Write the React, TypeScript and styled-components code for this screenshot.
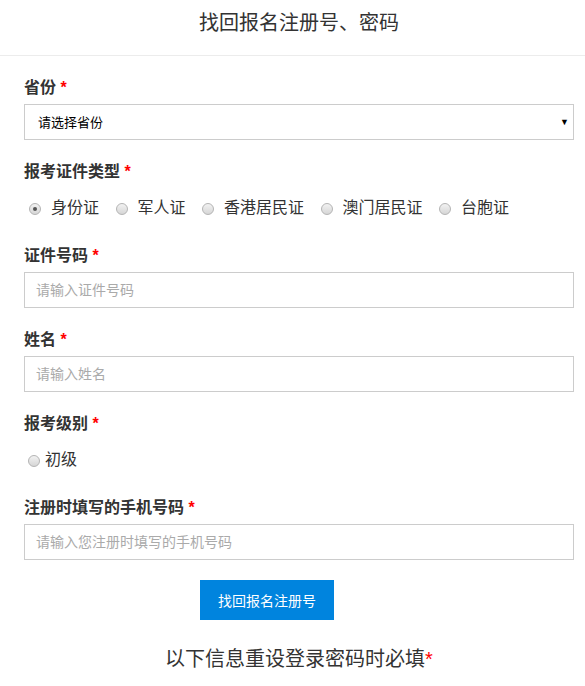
import React from 'react';
import styled, { createGlobalStyle } from 'styled-components';

const GlobalStyle = createGlobalStyle`
  html, body {
    margin: 0;
    padding: 0;
    background: #fff;
  }
  body {
    font-family: "Liberation Sans", "Noto Sans CJK SC", sans-serif;
    color: #333;
  }
`;

const idTypes = ['身份证', '军人证', '香港居民证', '澳门居民证', '台胞证'];

const App = () => {
  return (
    <Page>
      <GlobalStyle />
      <Header>
        <Title>找回报名注册号、密码</Title>
      </Header>
      <Form>
        <Field>
          <Label>
            省份 <Star>*</Star>
          </Label>
          <SelectWrap>
            <Select defaultValue="">
              <option value="">请选择省份</option>
            </Select>
            <Arrow>▼</Arrow>
          </SelectWrap>
        </Field>

        <Field>
          <Label>
            报考证件类型 <Star>*</Star>
          </Label>
          <RadioRow>
            {idTypes.map((t, i) => (
              <RadioOption key={t}>
                <Radio type="radio" name="idType" defaultChecked={i === 0} />
                {t}
              </RadioOption>
            ))}
          </RadioRow>
        </Field>

        <Field>
          <Label>
            证件号码 <Star>*</Star>
          </Label>
          <Input placeholder="请输入证件号码" />
        </Field>

        <Field>
          <Label>
            姓名 <Star>*</Star>
          </Label>
          <Input placeholder="请输入姓名" />
        </Field>

        <Field>
          <Label>
            报考级别 <Star>*</Star>
          </Label>
          <RadioRow>
            <RadioOption $compact>
              <Radio type="radio" name="level" $compact />
              初级
            </RadioOption>
          </RadioRow>
        </Field>

        <Field>
          <Label>
            注册时填写的手机号码 <Star>*</Star>
          </Label>
          <Input placeholder="请输入您注册时填写的手机号码" />
        </Field>

        <SubmitButton type="button">找回报名注册号</SubmitButton>

        <Notice>
          以下信息重设登录密码时必填<NoticeStar>*</NoticeStar>
        </Notice>
      </Form>
    </Page>
  );
};

const Page = styled.div`
  width: 585px;
  background: #fff;
`;

const Header = styled.div`
  height: 56px;
  box-sizing: border-box;
  border-bottom: 1px solid #ececec;
  padding: 9px 11px 0 24px;
  text-align: center;
`;

const Title = styled.h1`
  margin: 0;
  font-size: 20px;
  line-height: 28px;
  font-weight: normal;
  color: #333;
`;

const Form = styled.div`
  padding: 20px 11px 0 24px;
`;

const Field = styled.div`
  display: flex;
  flex-direction: column;
  margin-bottom: 20px;
`;

const Label = styled.div`
  font-size: 16px;
  line-height: 24px;
  font-weight: bold;
  color: #333;
  margin-bottom: 4px;
`;

const Star = styled.span`
  color: #f00;
  font-weight: bold;
`;

const SelectWrap = styled.div`
  position: relative;
`;

const Select = styled.select`
  appearance: none;
  width: 100%;
  height: 36px;
  box-sizing: border-box;
  border: 1px solid #ccc;
  border-radius: 0;
  background: #fff;
  padding: 0 13px;
  font-family: "Liberation Sans", "Noto Sans CJK SC", sans-serif;
  font-size: 13px;
  color: #000;
  outline: none;
`;

const Arrow = styled.span`
  position: absolute;
  right: 5px;
  top: 11px;
  font-size: 9px;
  line-height: 14px;
  color: #000;
  pointer-events: none;
`;

const Input = styled.input`
  width: 100%;
  height: 36px;
  box-sizing: border-box;
  border: 1px solid #ccc;
  border-radius: 0;
  padding: 0 11px;
  font-family: "Liberation Sans", "Noto Sans CJK SC", sans-serif;
  font-size: 14px;
  color: #333;
  outline: none;

  &::placeholder {
    color: #aaa;
  }
`;

const RadioRow = styled.div`
  display: flex;
  align-items: center;
  height: 28px;
  margin-top: 6px;
  padding-bottom: 2px;
`;

const RadioOption = styled.label<{ $compact?: boolean }>`
  display: flex;
  align-items: center;
  font-size: 16px;
  line-height: 24px;
  color: #333;
  margin-right: ${(p) => (p.$compact ? '0' : '11.5px')};
`;

const Radio = styled.input<{ $compact?: boolean }>`
  appearance: none;
  width: 12px;
  height: 12px;
  box-sizing: border-box;
  margin: 2px ${(p) => (p.$compact ? '5px' : '10px')} 0 ${(p) => (p.$compact ? '4px' : '5px')};
  border: 1px solid #b4b4b4;
  border-radius: 50%;
  background: linear-gradient(#f2f2f2, #d6d6d6);
  position: relative;

  &:checked::after {
    content: '';
    position: absolute;
    left: 3px;
    top: 3px;
    width: 4px;
    height: 4px;
    border-radius: 50%;
    background: #555;
  }
`;

const SubmitButton = styled.button`
  display: block;
  width: 134px;
  height: 40px;
  margin: 1px 0 0 176px;
  border: none;
  background: #0084de;
  color: #fff;
  font-family: "Liberation Sans", "Noto Sans CJK SC", sans-serif;
  font-size: 14px;
  cursor: pointer;
`;

const Notice = styled.div`
  text-align: center;
  font-size: 20px;
  line-height: 28px;
  color: #333;
  margin-top: 25px;
  padding-bottom: 12px;
`;

const NoticeStar = styled.span`
  color: #f00;
`;

export default App;
